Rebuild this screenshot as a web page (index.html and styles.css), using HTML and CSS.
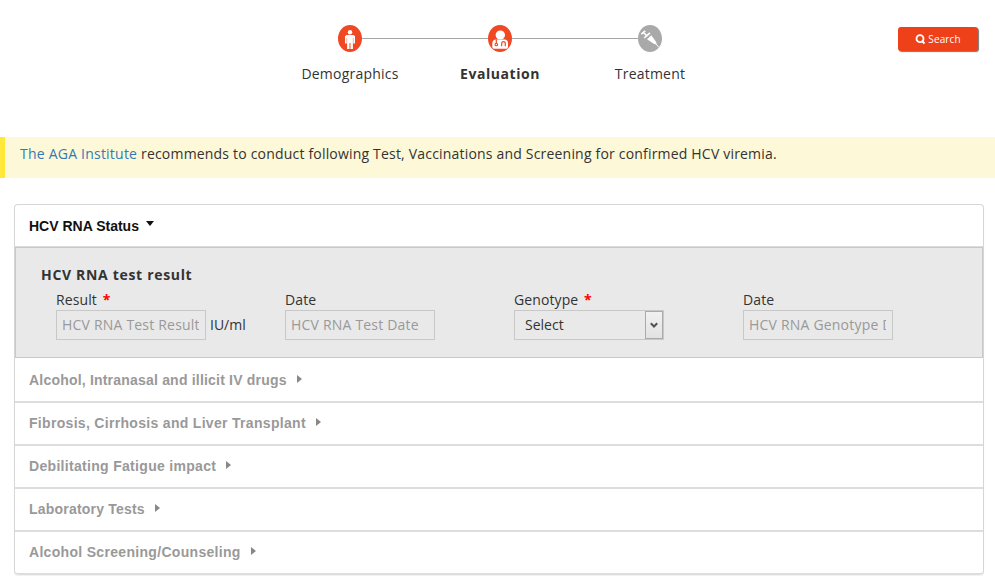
FILE: index.html
```html
<!DOCTYPE html>
<html lang="en">
<head>
<meta charset="utf-8">
<title>HCV Evaluation</title>
<link rel="stylesheet" href="styles.css">
</head>
<body>
<header class="top">
  <nav class="steps">
    <div class="step">
      <svg class="step-icon" viewBox="0 0 24 27" width="24" height="27">
        <ellipse cx="12" cy="13.5" rx="12" ry="13.5" fill="#f04822"/>
        <circle cx="12" cy="7.2" r="2.200" fill="#fff"/>
        <path d="M8.500 10h7l1.500 1.200v7.300h-1.700v-5.600h-.4V24h-2.400v-6h-1v6H9.100V12.900h-.4v5.600H7v-7.300z" fill="#fff"/>
      </svg>
      <span class="step-name">Demographics</span>
    </div>
    <div class="step active">
      <svg class="step-icon" viewBox="0 0 24 27" width="24" height="27">
        <ellipse cx="12" cy="13.5" rx="12" ry="13.5" fill="#f04822"/>
        <ellipse cx="12.300" cy="10" rx="4.700" ry="4.500" fill="#fff"/>
        <path d="M7.500 14.500h9.500c2 .3 3 1.800 3 4V22q0 1.700-1.700 1.700H6q-1.700 0-1.700-1.700v-3.500c0-2.300 1-3.700 3.200-4z" fill="#fff"/>
        <path d="M8.300 14.500v4M13.700 21.200V18.500c0-2.600 3.600-2.600 3.600 0v2.700" fill="none" stroke="#f04822" stroke-width="1.200"/>
        <circle cx="8.300" cy="19.500" r="1.300" fill="none" stroke="#f04822" stroke-width="1.100"/>
      </svg>
      <span class="step-name">Evaluation</span>
    </div>
    <div class="step">
      <svg class="step-icon" viewBox="0 0 24 27" width="24" height="27">
        <ellipse cx="12" cy="13.500" rx="12" ry="13.500" fill="#a9a9a9"/>
        <path d="M3.300 9.200l3.900-3.400M5.300 7.500l4 3.700" stroke="#fff" stroke-width="1.600" fill="none"/>
        <path d="M6.200 13l5.800-5.200" stroke="#fff" stroke-width="1.600" fill="none"/>
        <path d="M9 14.300l4.300-4 4.900 6.700.4 2.500-2.500-.4z" fill="#fff"/>
        <path d="M17.800 18.700l3 3.600" stroke="#fff" stroke-width="1"/>
      </svg>
      <span class="step-name">Treatment</span>
    </div>
  </nav>
  <button class="search" type="button"><svg width="11" height="11" viewBox="0 0 11 11"><circle cx="5" cy="4.700" r="3.500" fill="none" stroke="#fff" stroke-width="1.800"/><path d="M7 7l2.500 2.500" stroke="#fff" stroke-width="2"/></svg><span>Search</span></button>
</header>

<div class="notice"><a class="notice-link">The AGA Institute</a> recommends to conduct following Test, Vaccinations and Screening for confirmed HCV viremia.</div>

<main class="panel">
  <h2 class="row open"><span>HCV RNA Status</span><i class="caret-down"></i></h2>
  <section class="details">
    <h3 class="group">HCV RNA test result</h3>
    <div class="fields">
      <div class="field">
        <label class="label">Result <b class="req">*</b></label>
        <div class="control"><input class="input" placeholder="HCV RNA Test Result"><span class="unit">IU/ml</span></div>
      </div>
      <div class="field">
        <label class="label">Date</label>
        <div class="control"><input class="input" placeholder="HCV RNA Test Date"></div>
      </div>
      <div class="field">
        <label class="label">Genotype <b class="req">*</b></label>
        <div class="control"><div class="select"><span>Select</span><span class="arrow"><svg width="8" height="7" viewBox="0 0 8 7"><path d="M.8 1.300L4 4.500l3.200-3.200" fill="none" stroke="#505050" stroke-width="2"/></svg></span></div></div>
      </div>
      <div class="field">
        <label class="label">Date</label>
        <div class="control"><input class="input" placeholder="HCV RNA Genotype Date"></div>
      </div>
    </div>
  </section>
  <h2 class="row first"><span>Alcohol, Intranasal and illicit IV drugs</span><i class="caret-right"></i></h2>
  <h2 class="row wide"><span>Fibrosis, Cirrhosis and Liver Transplant</span><i class="caret-right"></i></h2>
  <h2 class="row wide"><span>Debilitating Fatigue impact</span><i class="caret-right"></i></h2>
  <h2 class="row"><span>Laboratory Tests</span><i class="caret-right"></i></h2>
  <h2 class="row wide"><span>Alcohol Screening/Counseling</span><i class="caret-right"></i></h2>
</main>
</body>
</html>
```
FILE: styles.css
```css
* { box-sizing: border-box; }
body {
  margin: 0;
  height: 581px;
  overflow: hidden;
  background: #fff;
  color: #333;
  font: 14px/20px "Open Sans", sans-serif;
}
.top {
  height: 137px;
  padding: 25px 17px 0 275px;
  display: flex;
  justify-content: space-between;
  align-items: flex-start;
}
.steps {
  display: flex;
  background: linear-gradient(#a5a5a5, #a5a5a5) 75px 13px / 300px 1px no-repeat;
}
.step {
  width: 150px;
  display: flex;
  flex-direction: column;
  align-items: center;
}
.step-icon { display: block; margin-bottom: 12px; }
.step-name { letter-spacing: .22px; }
.active .step-name { font-weight: 700; letter-spacing: .55px; }
.search {
  width: 80px;
  height: 24px;
  margin-top: 2px;
  padding: 0;
  border: 0;
  border-radius: 3px;
  background: #ef4119;
  box-shadow: 1px 1px 1px #777;
  color: #fff;
  font: 10px/14px "Open Sans", sans-serif;
  letter-spacing: .1px;
  display: flex;
  align-items: center;
  justify-content: center;
  gap: 2px;
}
.notice {
  height: 41px;
  padding: 7px 15px;
  border-left: 5px solid #ffe838;
  background: #fdf8d7;
  letter-spacing: .19px;
  white-space: nowrap;
}
.notice-link { color: #337ab7; letter-spacing: .22px; }
.panel {
  margin: 26px 11px 0 14px;
  border: 1px solid #d6d6d6;
  border-bottom: 0;
  border-radius: 4px;
  box-shadow: 0 1px 1px rgba(0, 0, 0, .06);
}
.row {
  height: 43px;
  margin: 0;
  padding: 0 0 2px 14px;
  border-bottom: 2px solid #ddd;
  display: flex;
  align-items: center;
  gap: 10px;
  color: #999;
  font: bold 14px/20px "Liberation Sans", sans-serif;
  letter-spacing: .2px;
}
.row.wide { letter-spacing: .31px; }
.row.first { height: 45px; padding-bottom: 0; }
.row:last-child { border-radius: 0 0 4px 4px; }
.row.open {
  height: 42px;
  padding-bottom: 0;
  border-bottom-width: 1px;
  color: #111;
  gap: 7px;
  letter-spacing: 0;
}
.caret-right {
  border: solid transparent;
  border-width: 4px 0 4px 5px;
  border-left-color: #888;
  margin-bottom: 1px;
}
.caret-down {
  margin-bottom: 4px;
  border: solid transparent;
  border-width: 5px 4px 0;
  border-top-color: #111;
}
.details {
  height: 111px;
  padding: 17px 0 0 25px;
  border: 1px solid #c8c8c8;
  background: #e9e9e9;
}
.group { margin: 0 0 5px; font-size: 14px; line-height: 20px; letter-spacing: .68px; }
.fields { display: grid; grid-template-columns: repeat(4, 229px); padding-left: 15px; }
.label { display: block; height: 20px; letter-spacing: .1px; }
.req { color: #f00; margin-left: 2px; }
.control { display: flex; align-items: center; gap: 4px; }
.input {
  width: 150px;
  height: 30px;
  padding: 0 6px 2px 5px;
  border: 1px solid #c8c8c8;
  background: transparent;
  font: 14px/20px "Open Sans", sans-serif;
  letter-spacing: .2px;
}
.input::placeholder { color: #999; }
.select {
  width: 150px;
  height: 30px;
  border: 1px solid #c8c8c8;
  padding-left: 10px;
  display: flex;
  align-items: center;
  justify-content: space-between;
}
.arrow {
  width: 18px;
  height: 28px;
  border: 1px solid #aaa;
  background: linear-gradient(#f1f1f1, #e2e2e2);
  display: flex;
  align-items: center;
  justify-content: center;
}
```
